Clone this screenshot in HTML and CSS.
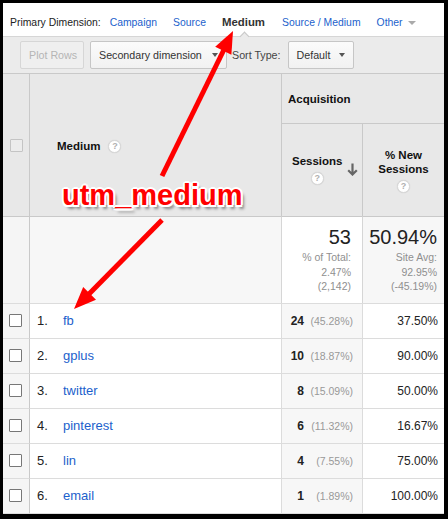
FILE: index.html
```html
<!DOCTYPE html>
<html>
<head>
<meta charset="utf-8">
<title>Medium report</title>
<link rel="stylesheet" href="styles.css">
</head>
<body>
<div class="frame">
  <div class="nav">
    <span class="nav-label">Primary Dimension:</span>
    <a class="nav-link">Campaign</a>
    <a class="nav-link">Source</a>
    <span class="nav-active">Medium</span>
    <a class="nav-link">Source / Medium</a>
    <a class="nav-link nav-other">Other<span class="tri tri-light"></span></a>
  </div>

  <div class="toolbar">
    <span class="btn btn-disabled btn-plot">Plot Rows</span>
    <span class="btn btn-sec">Secondary dimension<span class="tri"></span></span>
    <span class="sort-label">Sort Type:</span>
    <span class="btn btn-def">Default<span class="tri"></span></span>
  </div>

  <div class="grid">
    <div class="h h-check"><span class="cb cb-head"></span></div>
    <div class="h h-dim">Medium<span class="help">?</span></div>
    <div class="h h-group">Acquisition</div>
    <div class="h h-sess">
      <div class="h-label">Sessions<div class="help-row"><span class="help">?</span></div></div>
      <svg class="sort-arrow" width="11" height="13" viewBox="0 0 11 13"><path d="M5.5 0.5 V11.5 M1.2 7.2 L5.5 11.5 L9.8 7.2" fill="none" stroke="#666" stroke-width="2.2"/></svg>
    </div>
    <div class="h h-new">
      <div class="h-label">% New<br>Sessions<div class="help-row"><span class="help">?</span></div></div>
    </div>

    <div class="s c-check"></div>
    <div class="s c-dim"></div>
    <div class="s s-sess">
      <div class="big">53</div>
      <div class="sub">% of Total:<br>2.47%<br>(2,142)</div>
    </div>
    <div class="s s-new">
      <div class="big">50.94%</div>
      <div class="sub">Site Avg:<br>92.95%<br>(-45.19%)</div>
    </div>

    <div class="d c-check"><span class="cb"></span></div>
    <div class="d c-dim"><span class="idx">1.</span><a class="lnk">fb</a></div>
    <div class="d c-sess"><b>24</b><span class="pct">(45.28%)</span></div>
    <div class="d c-new">37.50%</div>

    <div class="d c-check"><span class="cb"></span></div>
    <div class="d c-dim"><span class="idx">2.</span><a class="lnk">gplus</a></div>
    <div class="d c-sess"><b>10</b><span class="pct">(18.87%)</span></div>
    <div class="d c-new">90.00%</div>

    <div class="d c-check"><span class="cb"></span></div>
    <div class="d c-dim"><span class="idx">3.</span><a class="lnk">twitter</a></div>
    <div class="d c-sess"><b>8</b><span class="pct">(15.09%)</span></div>
    <div class="d c-new">50.00%</div>

    <div class="d c-check"><span class="cb"></span></div>
    <div class="d c-dim"><span class="idx">4.</span><a class="lnk">pinterest</a></div>
    <div class="d c-sess"><b>6</b><span class="pct">(11.32%)</span></div>
    <div class="d c-new">16.67%</div>

    <div class="d c-check"><span class="cb"></span></div>
    <div class="d c-dim"><span class="idx">5.</span><a class="lnk">lin</a></div>
    <div class="d c-sess"><b>4</b><span class="pct">(7.55%)</span></div>
    <div class="d c-new">75.00%</div>

    <div class="d c-check last"><span class="cb"></span></div>
    <div class="d c-dim last"><span class="idx">6.</span><a class="lnk">email</a></div>
    <div class="d c-sess last"><b>1</b><span class="pct">(1.89%)</span></div>
    <div class="d c-new last">100.00%</div>
  </div>
</div>

<svg class="annot" width="448" height="519" viewBox="0 0 448 519">
  <line x1="162" y1="176" x2="224.5" y2="48.5" stroke="#ff0000" stroke-width="5"/>
  <polygon points="233,31 231.4,54.7 215.2,46.8" fill="#ff0000"/>
  <line x1="162" y1="220" x2="88.5" y2="294.5" stroke="#ff0000" stroke-width="5"/>
  <polygon points="74,309 96,299.8 83.2,287" fill="#ff0000"/>
</svg>
<div class="callout">utm_medium</div>
</body>
</html>
```

FILE: styles.css
```css
* { box-sizing: border-box; }

html, body {
  margin: 0;
  padding: 0;
}

body {
  position: relative;
  width: 448px;
  height: 519px;
  padding: 3px 4px 5px 3px;
  background: #000;
  overflow: hidden;
  font-family: "Liberation Sans", Arial, sans-serif;
  color: #222;
}

.frame {
  width: 441px;
  height: 511px;
  background: #fff;
  overflow: hidden;
}

/* ---------- primary dimension nav ---------- */
.nav {
  display: flex;
  align-items: baseline;
  height: 34px;
  padding: 12px 0 0 7px;
  border-bottom: 1px solid #d6d6d6;
  font-size: 10.4px;
  line-height: 14px;
  white-space: nowrap;
}

.nav-label {
  color: #222;
  margin-right: 9px;
}

.nav-link {
  color: #1c5fcc;
  margin-right: 16px;
  text-decoration: none;
}

.nav-active {
  position: relative;
  display: inline-block;
  font-weight: bold;
  font-size: 11.4px;
  color: #333;
  margin-right: 17px;
}

.nav-active::after {
  content: "";
  position: absolute;
  left: 50%;
  top: 18px;
  width: 6px;
  height: 6px;
  margin-left: -2px;
  background: #ebebeb;
  border-top: 1px solid #c8c8c8;
  border-left: 1px solid #c8c8c8;
  transform: rotate(45deg);
}

.nav-other {
  display: inline-flex;
  align-items: center;
}

.tri {
  display: inline-block;
  width: 0;
  height: 0;
  border-left: 3.5px solid transparent;
  border-right: 3.5px solid transparent;
  border-top: 4px solid #555;
}

.tri-light {
  margin-left: 5px;
  border-top-color: #aaa;
  border-left-width: 4px;
  border-right-width: 4px;
}

/* ---------- toolbar ---------- */
.toolbar {
  display: flex;
  align-items: center;
  height: 36px;
  padding-left: 17px;
  background: #ebebeb;
  font-size: 10.7px;
  white-space: nowrap;
}

.btn {
  display: inline-flex;
  align-items: center;
  height: 28px;
  padding: 0 8px;
  border: 1px solid #c6c6c6;
  border-radius: 2px;
  background: linear-gradient(#fbfbfb, #f1f1f1);
  color: #333;
}

.btn .tri {
  margin-left: auto;
}

.btn-disabled {
  background: #efefef;
  border-color: #d6d6d6;
  color: #b5b5b5;
}

.btn-plot {
  width: 64px;
}

.btn-sec {
  width: 137px;
  margin-left: 6px;
}

.sort-label {
  margin-left: 5px;
  color: #444;
}

.btn-def {
  width: 66px;
  margin-left: 7px;
}

/* ---------- data grid ---------- */
.grid {
  display: grid;
  grid-template-columns: 26px 252px 81px 82px;
  grid-template-rows: 50px 93px 87px repeat(5, 35px) 36px;
}

.grid > div {
  border-top: 1px solid #dcdcdc;
}

.h {
  background: #e8e8e8;
  border-top-color: #c9c9c9 !important;
  font-weight: bold;
  font-size: 11.5px;
  line-height: 14px;
  color: #111;
}

.h-check {
  grid-row: 1 / 3;
  grid-column: 1;
  display: flex;
  align-items: center;
  justify-content: center;
}

.h-dim {
  grid-row: 1 / 3;
  grid-column: 2;
  display: flex;
  align-items: center;
  padding-left: 27px;
  padding-top: 2px;
  border-left: 1px solid #c9c9c9;
}

.h-dim .help {
  margin-left: 8px;
}

.h-group {
  grid-row: 1;
  grid-column: 3 / 5;
  display: flex;
  align-items: center;
  padding-left: 6px;
  border-left: 1px solid #c9c9c9;
}

.h-sess {
  grid-row: 2;
  grid-column: 3;
  display: flex;
  align-items: center;
  padding: 0 4px 0 10px;
  border-left: 1px solid #c9c9c9;
}

.h-sess .h-label {
  margin-top: -2px;
}

.h-sess .sort-arrow {
  margin-left: auto;
  margin-top: -2px;
}

.h-new {
  grid-row: 2;
  grid-column: 4;
  display: flex;
  align-items: center;
  justify-content: center;
  border-left: 1px solid #c9c9c9;
}

.h-label {
  text-align: center;
}

.help-row {
  height: 13px;
  margin-top: 4px;
  display: flex;
  justify-content: center;
}

.help {
  display: inline-block;
  width: 13px;
  height: 13px;
  border-radius: 50%;
  background: #fff;
  border: 1px solid #d8d8d8;
  box-shadow: 0 0 1px rgba(0, 0, 0, 0.15);
  color: #b0b0b0;
  font-size: 9px;
  font-weight: bold;
  line-height: 11px;
  text-align: center;
}

/* checkboxes */
.cb {
  display: inline-block;
  width: 13px;
  height: 13px;
  border: 1px solid #777;
  border-radius: 1px;
  background: #fff;
}

.cb-head {
  border-color: #c4c4c4;
  background: #ececec;
}

/* summary row */
.s {
  background: #f7f7f7;
  border-top-color: #c9c9c9 !important;
}

.s.c-dim,
.s-sess,
.s-new {
  border-left: 1px solid #d6d6d6;
}

.s.c-dim {
  border-left-color: #c9c9c9;
}

.s-sess {
  background: #fff;
  text-align: right;
  padding: 8px 11px 0 0;
}

.s-new {
  text-align: right;
  padding: 8px 7px 0 0;
}

.big {
  font-size: 20px;
  line-height: 24px;
  color: #222;
  margin-bottom: 1px;
}

.sub {
  font-size: 10.5px;
  line-height: 14.5px;
  color: #8f8f8f;
}

/* data rows */
.d {
  display: flex;
  align-items: center;
  font-size: 12px;
  padding-bottom: 1px;
}

.d.last {
  border-bottom: 1px solid #dcdcdc;
}

.c-check {
  background: #f5f5f5;
  justify-content: center;
  padding-right: 1px;
}

.d.c-dim {
  padding-left: 7px;
  border-left: 1px solid #c9c9c9;
  font-size: 13px;
}

.idx {
  display: inline-block;
  width: 26px;
  color: #222;
}

.lnk {
  color: #1c5fcc;
  text-decoration: none;
}

.c-sess {
  background: #f7f7f7;
  justify-content: flex-end;
  padding-right: 9px;
  border-left: 1px solid #dcdcdc;
}

.c-sess b {
  color: #222;
}

.pct {
  display: inline-block;
  width: 49px;
  text-align: right;
  font-size: 10.5px;
  color: #999;
}

.d.c-new {
  justify-content: flex-end;
  padding-right: 6px;
  border-left: 1px solid #dcdcdc;
  color: #222;
}

/* ---------- annotation overlay ---------- */
.annot {
  position: absolute;
  left: 0;
  top: 0;
}

.callout {
  position: absolute;
  left: 62px;
  top: 180px;
  font-size: 29px;
  line-height: 30px;
  font-weight: bold;
  color: #ff0000;
  white-space: nowrap;
  text-shadow:
    2px 0 0 #fff, -2px 0 0 #fff, 0 2px 0 #fff, 0 -2px 0 #fff,
    1.5px 1.5px 0 #fff, -1.5px -1.5px 0 #fff, 1.5px -1.5px 0 #fff, -1.5px 1.5px 0 #fff,
    3px 4px 3px rgba(0, 0, 0, 0.45);
}
```
